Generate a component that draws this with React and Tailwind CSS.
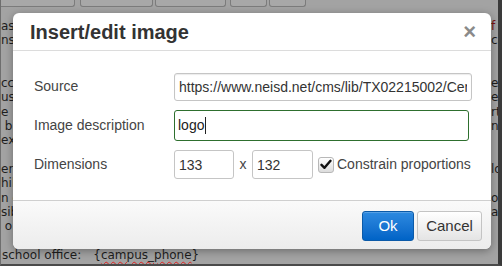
import React from "react";

const lines = [
  ["as", "f"],
  ["ns", "ca"],
  ["", ""],
  ["", ""],
  ["cc", "er"],
  ["us", "er"],
  ["e", "rt"],
  [" b", "n"],
  ["ex", ""],
  ["", ""],
  ["er", "lo"],
  ["hil", ""],
  ["n c", "o"],
  ["sib", "a"],
  [" o", ""],
  ["", ""],
];

export default function App() {
  const sans = { fontFamily: '"Liberation Sans", Arial, sans-serif' };
  const page = { fontFamily: '"DejaVu Sans", Verdana, sans-serif' };
  return (
    <div className="relative w-[502px] h-[266px] overflow-hidden bg-[#a3a3a3] border-l border-l-[#6e6e6e] border-r-4 border-r-[#3a3a3a] border-b-2 border-b-[#4a4a4a] box-border">
      {/* toolbar */}
      <div className="flex h-[7px]">
        <div className="w-[74px] border-b border-r border-[#7c7c7c] bg-[#a8a8a8] rounded-br-[3px]" />
        <div className="ml-[5px] w-[73px] border-b border-x border-[#7c7c7c] bg-[#a8a8a8] rounded-b-[3px]" />
        <div className="ml-[2px] w-[71px] border-b border-x border-[#7c7c7c] bg-[#a8a8a8] rounded-b-[3px]" />
        <div className="ml-[4px] w-[37px] border-b border-x border-[#7c7c7c] bg-[#a8a8a8] rounded-b-[3px]" />
        <div className="ml-[2px] w-[37px] border-b border-x border-[#7c7c7c] bg-[#a8a8a8] rounded-b-[3px]" />
      </div>
      {/* page text */}
      <div className="pt-[12px] text-[12px] leading-[14.3px] text-[#1e1e1e]" style={page}>
        {lines.map(([l, r], i) => (
          <div key={i} className="flex h-[14.3px]">
            <span className="w-[13px] overflow-hidden whitespace-pre">{l}</span>
            <span className="flex-1" />
            <span className={"w-[7px] overflow-hidden whitespace-pre " + (i === 0 ? "text-[#7a1010]" : "")}>{r}</span>
          </div>
        ))}
        <div className="flex h-[14.3px] pl-[1px] whitespace-pre">
          <span>school office:</span>
          <span className="ml-[12px]">{"{"}</span>
          <span className="underline decoration-wavy decoration-[#e02020] decoration-[1px] underline-offset-[2px]">campus_phone</span>
          <span>{"}"}</span>
        </div>
      </div>

      {/* dialog */}
      <div
        className="absolute left-[12px] top-[13px] w-[478px] h-[236px] bg-white rounded-[6px] shadow-[0_2px_8px_rgba(0,0,0,0.35)] flex flex-col overflow-hidden"
        style={sans}
      >
        <div className="h-[38px] shrink-0 flex items-center justify-between pl-[17px] pr-[15px] border-b border-[#dcdcdc]">
          <span className="text-[20px] font-bold text-[#333333] leading-none">Insert/edit image</span>
          <span className="text-[22px] font-bold text-[#8a8a8a] leading-none">×</span>
        </div>
        <div className="flex-1 flex flex-col gap-[10px] pt-[21px] text-[14px] text-[#444444]">
          <div className="flex items-center h-[29px]">
            <span className="w-[161px] pl-[21px]">Source</span>
            <input
              readOnly
              value="https://www.neisd.net/cms/lib/TX02215002/Centricity/Domain/1/logo.png"
              className="w-[298px] h-[28px] border border-[#c5c5c5] rounded-[3px] px-[4px] text-[14px] text-[#333] bg-white outline-none shadow-[inset_0_1px_1px_rgba(0,0,0,0.08)]"
              style={sans}
            />
          </div>
          <div className="flex items-center h-[29px]">
            <span className="w-[161px] pl-[21px]">Image description</span>
            <div className="w-[295px] h-[31px] border border-[#2e6f2e] rounded-[3px] flex items-center pl-[3px] text-[14px] text-[#222]">
              <span>logo</span>
              <span className="w-[1px] h-[17px] bg-[#222] ml-[1px]" />
            </div>
          </div>
          <div className="flex items-center h-[29px]">
            <span className="w-[161px] pl-[21px]">Dimensions</span>
            <input
              readOnly
              value="133"
              className="w-[60px] h-[29px] border border-[#c5c5c5] rounded-[3px] px-[4px] text-[14px] text-[#333] bg-white outline-none"
              style={sans}
            />
            <span className="w-[18px] text-center text-[#444]">x</span>
            <input
              readOnly
              value="132"
              className="w-[61px] h-[29px] border border-[#c5c5c5] rounded-[3px] px-[4px] text-[14px] text-[#333] bg-white outline-none"
              style={sans}
            />
            <span className="ml-[5px] w-[16px] h-[16px] border border-[#b8b8b8] rounded-[3px] bg-gradient-to-b from-[#ffffff] to-[#dcdcdc] flex items-center justify-center">
              <svg width="12" height="11" viewBox="0 0 12 11">
                <path d="M1.5 5.8 L4.5 8.8 L10.5 1.8" fill="none" stroke="#111" strokeWidth="2.4" strokeLinecap="round" strokeLinejoin="round" />
              </svg>
            </span>
            <span className="ml-[3px] text-[#444]">Constrain proportions</span>
          </div>
        </div>
        <div className="h-[49px] shrink-0 border-t border-[#cfcfcf] bg-gradient-to-b from-[#fafafa] to-[#ececec] flex items-start justify-end pt-[10px] pr-[9px] gap-[3px]">
          <button
            className="w-[52px] h-[30px] rounded-[3px] border border-[#0b5aa8] bg-gradient-to-b from-[#2d8ae0] to-[#0063c6] text-white text-[15px] shadow-[inset_0_1px_0_rgba(255,255,255,0.2)]"
            style={sans}
          >
            Ok
          </button>
          <button
            className="w-[65px] h-[30px] rounded-[3px] border border-[#c4c4c4] bg-gradient-to-b from-[#ffffff] to-[#e4e4e4] text-[#333] text-[15px]"
            style={sans}
          >
            Cancel
          </button>
        </div>
      </div>
    </div>
  );
}
